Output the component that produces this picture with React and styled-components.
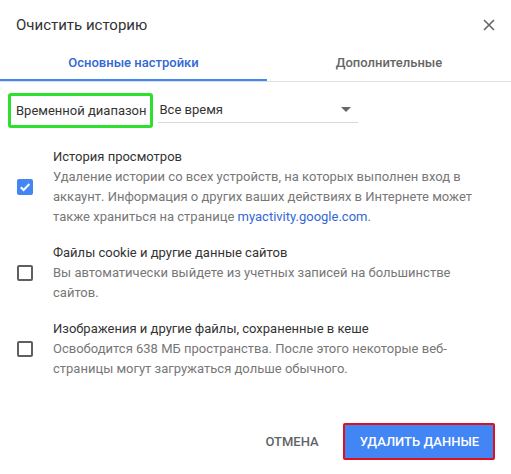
import React from 'react';
import styled, { createGlobalStyle } from 'styled-components';

const GlobalStyle = createGlobalStyle`
    body {
        margin: 0;
        background: #fff;
        font-family: Roboto, "Liberation Sans", Arial, sans-serif;
    }
`;

const Dialog = styled.div`
    width: 511px;
    height: 474px;
    background: #fff;
    display: flex;
    flex-direction: column;
`;

const Header = styled.div`
    display: flex;
    align-items: center;
    justify-content: space-between;
    height: 44px;
    padding: 5px 14px 0 16px;
    box-sizing: border-box;
    .title {
        font-size: 15px;
        color: #333;
        line-height: 20px;
    }
`;

const CloseButton = styled.button`
    border: 0;
    background: none;
    padding: 0;
    width: 16px;
    height: 16px;
    display: flex;
    align-items: center;
    justify-content: center;
    cursor: pointer;
`;

const TabBar = styled.div`
    display: grid;
    grid-template-columns: 267px 1fr;
    border-bottom: 1px solid #e0e0e0;
`;

const Tab = styled.div`
    height: 37px;
    display: flex;
    align-items: center;
    justify-content: center;
    font-size: 13px;
    font-weight: 500;
    color: ${(p) => (p.active ? '#3367d6' : '#666')};
    box-shadow: ${(p) => (p.active ? 'inset 0 -2px 0 #4285f4' : 'none')};
`;

const Content = styled.div`
    padding: 11px 23px 0 8px;
`;

const RangeRow = styled.div`
    display: flex;
    align-items: center;
`;

const RangeLabel = styled.div`
    border: 3px solid #2ee02e;
    border-radius: 3px;
    height: 29px;
    padding: 0 4px 0 5px;
    display: flex;
    align-items: center;
    font-size: 13px;
    color: #333;
`;

const Select = styled.div`
    margin-left: 5px;
    width: 200px;
    height: 24px;
    box-sizing: border-box;
    border-bottom: 1px solid #d8d8d8;
    display: flex;
    align-items: center;
    justify-content: space-between;
    padding: 0 7px 2px 1px;
    font-size: 13px;
    color: #333;
    .arrow {
        width: 0;
        height: 0;
        border-left: 5px solid transparent;
        border-right: 5px solid transparent;
        border-top: 5px solid #666;
    }
`;

const ItemList = styled.div`
    margin-top: 19px;
    display: flex;
    flex-direction: column;
    gap: 16px;
`;

const Item = styled.div`
    display: flex;
    align-items: center;
    padding-left: 9px;
`;

const Checkbox = styled.div`
    flex: none;
    width: 16px;
    height: 16px;
    box-sizing: border-box;
    border-radius: 2px;
    border: 2px solid ${(p) => (p.checked ? '#4285f4' : '#5f5f5f')};
    background: ${(p) => (p.checked ? '#4285f4' : '#fff')};
    display: flex;
    align-items: center;
    justify-content: center;
    margin-right: 20px;
`;

const ItemText = styled.div`
    font-size: 13px;
    line-height: 20px;
    .name {
        color: #333;
    }
    .desc {
        color: #777;
    }
    a {
        color: #3367d6;
        text-decoration: none;
    }
`;

const Footer = styled.div`
    display: flex;
    justify-content: flex-end;
    align-items: center;
    gap: 8px;
    padding: 44px 16px 0;
`;

const Button = styled.button`
    font-family: inherit;
    font-size: 13px;
    font-weight: 500;
    height: 37px;
    box-sizing: border-box;
    cursor: pointer;
    border-radius: 2px;
    padding: ${(p) => (p.primary ? '0 14px 0 15px' : '0 16px')};
    color: ${(p) => (p.primary ? '#fff' : '#5f6368')};
    background: ${(p) => (p.primary ? '#4285f4' : 'transparent')};
    border: ${(p) => (p.primary ? '2px solid #e0101e' : '0')};
`;

const items = [
    {
        name: 'История просмотров',
        checked: true,
        desc: (
            <>
                Удаление истории со всех устройств, на которых выполнен вход в аккаунт. Информация о других
                ваших действиях в Интернете может также храниться на странице{' '}
                <a href="#">myactivity.google.com</a>.
            </>
        ),
    },
    {
        name: 'Файлы cookie и другие данные сайтов',
        desc: 'Вы автоматически выйдете из учетных записей на большинстве сайтов.',
    },
    {
        name: 'Изображения и другие файлы, сохраненные в кеше',
        desc: 'Освободится 638 МБ пространства. После этого некоторые веб-страницы могут загружаться дольше обычного.',
    },
];

const App = () => {
    return (
        <>
            <GlobalStyle />
            <Dialog>
                <Header>
                    <div className="title">Очистить историю</div>
                    <CloseButton aria-label="close">
                        <svg width="12" height="12" viewBox="0 0 12 12">
                            <path d="M1 1L11 11M11 1L1 11" stroke="#666" strokeWidth="1.6" />
                        </svg>
                    </CloseButton>
                </Header>
                <TabBar>
                    <Tab active>Основные настройки</Tab>
                    <Tab>Дополнительные</Tab>
                </TabBar>
                <Content>
                    <RangeRow>
                        <RangeLabel>Временной диапазон</RangeLabel>
                        <Select>
                            <span>Все время</span>
                            <span className="arrow" />
                        </Select>
                    </RangeRow>
                    <ItemList>
                        {items.map((item) => (
                            <Item key={item.name}>
                                <Checkbox checked={item.checked}>
                                    {item.checked && (
                                        <svg width="12" height="12" viewBox="0 0 12 12">
                                            <path d="M1.8 6.2L4.6 9L10.4 3" fill="none" stroke="#fff" strokeWidth="2" />
                                        </svg>
                                    )}
                                </Checkbox>
                                <ItemText>
                                    <div className="name">{item.name}</div>
                                    <div className="desc">{item.desc}</div>
                                </ItemText>
                            </Item>
                        ))}
                    </ItemList>
                </Content>
                <Footer>
                    <Button>ОТМЕНА</Button>
                    <Button primary>УДАЛИТЬ ДАННЫЕ</Button>
                </Footer>
            </Dialog>
        </>
    );
};

export default App;
